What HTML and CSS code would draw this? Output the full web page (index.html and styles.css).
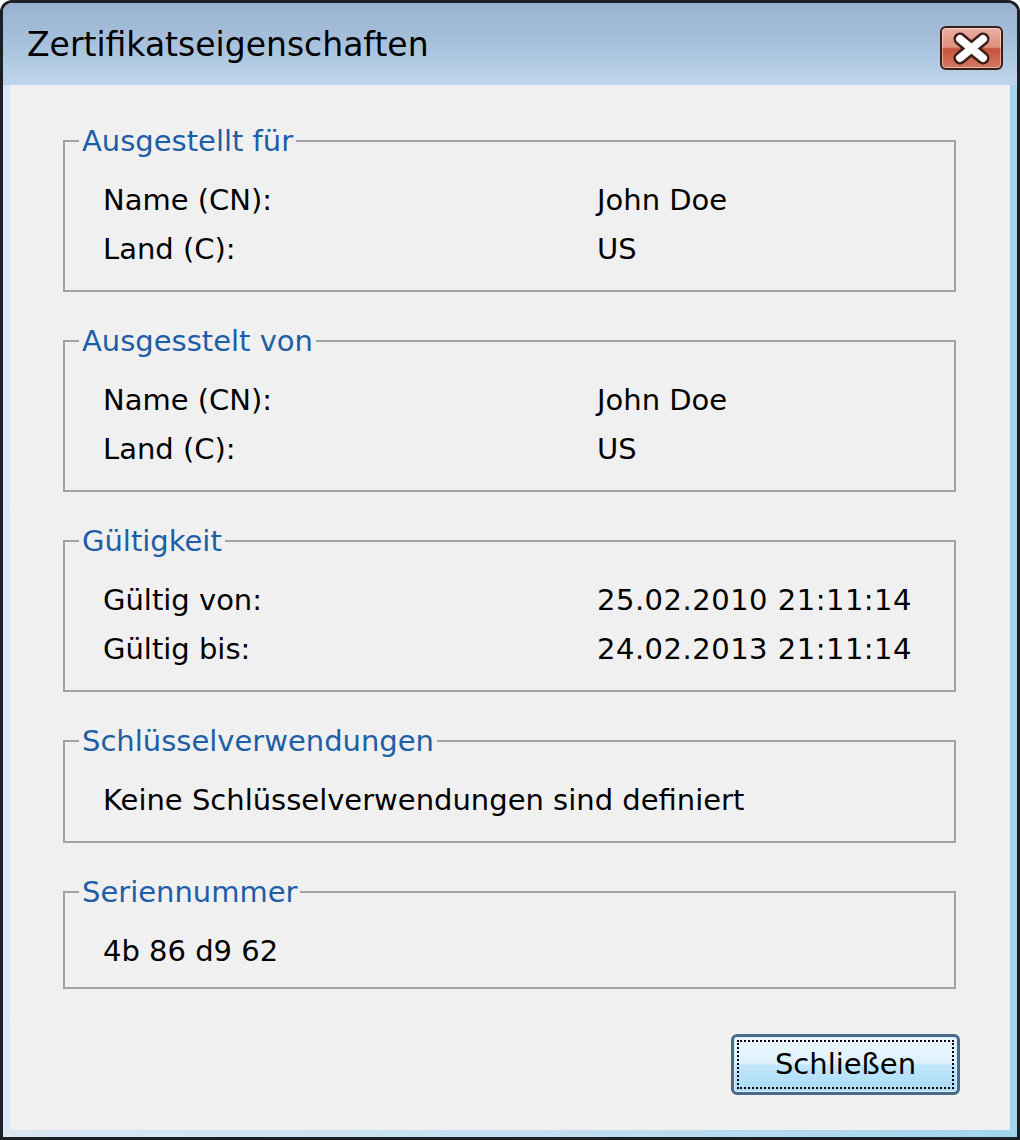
FILE: index.html
```html
<!DOCTYPE html>
<html lang="de">
<head>
    <meta charset="UTF-8">
    <meta name="viewport" content="width=device-width, initial-scale=1.0">
    <title>Zertifikatseigenschaften</title>
    <link rel="stylesheet" href="styles.css">
</head>
<body>
    <div class="window">
        <div class="titlebar">
            <span class="title">Zertifikatseigenschaften</span>
            <button class="close" aria-label="Schließen">
                <svg width="59" height="39" viewBox="0 0 59 39">
                    <path d="M18 10 L41 29 M41 10 L18 29" stroke="#3b1e1a" stroke-width="13" stroke-linecap="round"/>
                    <path d="M18 10 L41 29 M41 10 L18 29" stroke="#fff" stroke-width="8" stroke-linecap="round"/>
                </svg>
            </button>
        </div>
        <div class="frame">
            <div class="content">
                <fieldset class="group">
                    <legend>Ausgestellt für</legend>
                    <div class="rows">
                        <div class="row"><span class="key">Name (CN):</span><span>John Doe</span></div>
                        <div class="row"><span class="key">Land (C):</span><span>US</span></div>
                    </div>
                </fieldset>
                <fieldset class="group">
                    <legend>Ausgesstelt von</legend>
                    <div class="rows">
                        <div class="row"><span class="key">Name (CN):</span><span>John Doe</span></div>
                        <div class="row"><span class="key">Land (C):</span><span>US</span></div>
                    </div>
                </fieldset>
                <fieldset class="group">
                    <legend>Gültigkeit</legend>
                    <div class="rows">
                        <div class="row"><span class="key">Gültig von:</span><span class="num">25.02.2010 21:11:14</span></div>
                        <div class="row"><span class="key">Gültig bis:</span><span class="num">24.02.2013 21:11:14</span></div>
                    </div>
                </fieldset>
                <fieldset class="group">
                    <legend>Schlüsselverwendungen</legend>
                    <div class="rows">
                        <div class="row">Keine Schlüsselverwendungen sind definiert</div>
                    </div>
                </fieldset>
                <fieldset class="group last">
                    <legend>Seriennummer</legend>
                    <div class="rows">
                        <div class="row">4b 86 d9 62</div>
                    </div>
                </fieldset>
                <div class="actions">
                    <button class="btn">Schließen</button>
                </div>
            </div>
        </div>
    </div>
</body>
</html>
```

FILE: styles.css
```css
*,
*::after,
*::before{
    padding: 0;
    margin: 0;
    box-sizing: border-box;
}
html, body{
    width: 1020px;
    height: 1140px;
    overflow: hidden;
    background: #fff;
}
body{
    font: normal 29px/49px "DejaVu Sans", sans-serif;
    color: #000;
}
.window{
    width: 1020px;
    height: 1140px;
    border: 3px solid #1c1f24;
    border-radius: 12px 12px 0 0;
    display: flex;
    flex-direction: column;
    overflow: hidden;
}
.titlebar{
    height: 82px;
    flex: none;
    display: flex;
    align-items: center;
    justify-content: space-between;
    padding: 0 14px 0 24px;
    background: linear-gradient(to bottom, #97b1d0 0%, #a9c3de 55%, #bed6ec 100%);
}
.title{
    font-size: 33px;
    line-height: 40px;
    color: #000;
    margin-top: 2px;
}
.close{
    width: 63px;
    height: 44px;
    margin-top: 8px;
    border: 2px solid #3d1c18;
    border-radius: 6px;
    background: linear-gradient(to bottom, #eab0a3 0%, #df8e7c 48%, #c6523a 52%, #d27a64 100%);
    box-shadow: inset 0 0 0 1px rgba(255,255,255,0.45);
    display: flex;
    align-items: center;
    justify-content: center;
}
.close svg{
    display: block;
}
.frame{
    flex: 1;
    padding: 0 7px 7px 7px;
    background: linear-gradient(to right, #dbe8f4 0%, #c5dff0 50%, #a3d5ef 100%);
    display: flex;
}
.content{
    flex: 1;
    background: #f0f0f0;
    padding: 38px 54px 0 53px;
    display: flex;
    flex-direction: column;
}
.group{
    border: 2px solid #a2a2a2;
    padding: 0 14px 16px 14px;
    margin-bottom: 31px;
}
.group legend{
    padding: 0 3px;
    line-height: 36px;
    color: #1d5ea6;
}
.group.last{
    padding-bottom: 11px;
    margin-bottom: 45px;
}
.rows{
    padding-left: 24px;
    margin-top: 17px;
}
.row{
    display: flex;
    height: 49px;
    white-space: nowrap;
}
.key{
    width: 494px;
    flex: none;
}
.num{
    letter-spacing: 0.5px;
}
.actions{
    display: flex;
    justify-content: flex-end;
    margin-right: -4px;
}
.btn{
    width: 229px;
    height: 61px;
    font: normal 29px/1 "DejaVu Sans", sans-serif;
    color: #000;
    border: 3px solid #4b6a88;
    border-radius: 6px;
    background: linear-gradient(to bottom, #edf7fd 0%, #dcf1fc 48%, #c0e6fb 52%, #a9dcf7 100%);
    box-shadow: inset 0 0 0 1px #d8eefb;
    outline: 2px dotted #000;
    outline-offset: -8px;
}
```
